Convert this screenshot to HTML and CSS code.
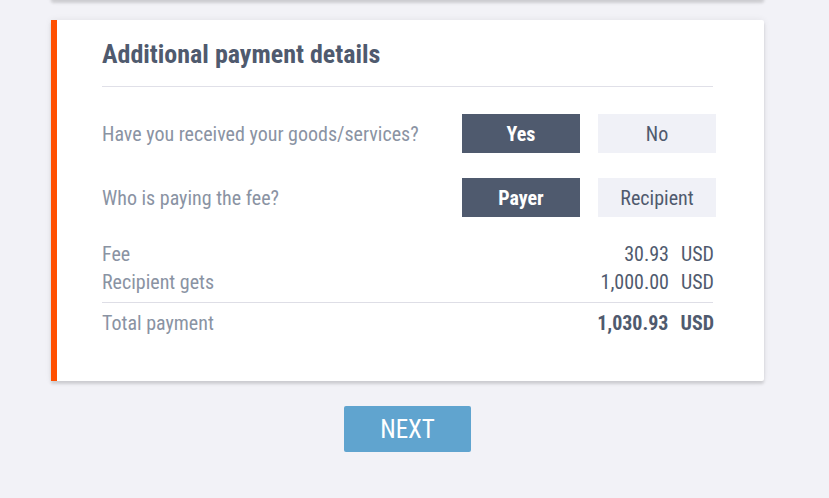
FILE: index.html
```html
<!DOCTYPE html>
<html lang="en">
<head>
<meta charset="utf-8">
<title>Additional payment details</title>
<link rel="stylesheet" href="styles.css">
</head>
<body>
<div class="page">
  <div class="card card-prev"></div>
  <section class="card card-main">
    <h2 class="title">Additional payment details</h2>
    <div class="question">
      <span class="q-label">Have you received your goods/services?</span>
      <div class="choices">
        <button class="choice active">Yes</button>
        <button class="choice">No</button>
      </div>
    </div>
    <div class="question">
      <span class="q-label">Who is paying the fee?</span>
      <div class="choices">
        <button class="choice active">Payer</button>
        <button class="choice">Recipient</button>
      </div>
    </div>
    <div class="summary">
      <div class="sum-row"><span class="sum-label">Fee</span><span class="sum-val">30.93<span class="cur">USD</span></span></div>
      <div class="sum-row"><span class="sum-label">Recipient gets</span><span class="sum-val">1,000.00<span class="cur">USD</span></span></div>
      <div class="sum-row total"><span class="sum-label">Total payment</span><span class="sum-val strong">1,030.93<span class="cur">USD</span></span></div>
    </div>
  </section>
  <div class="actions">
    <button class="next">NEXT</button>
  </div>
</div>
</body>
</html>
```
FILE: styles.css
```css
html, body {
  margin: 0;
  padding: 0;
  background: #f2f2f7;
}
body {
  font-family: "Roboto Condensed", "Roboto", "Liberation Sans Narrow", sans-serif;
  font-stretch: 75%;
  color: #4f5a6e;
}
.page {
  width: 713px;
  padding-left: 51px;
}
.card {
  background: #fff;
  box-shadow: 0 3px 3px rgba(0, 0, 0, 0.13), 0 0 7px rgba(0, 0, 0, 0.07);
  border-radius: 2px;
}
.card-prev {
  height: 40px;
  margin-top: -40px;
}
.card-main {
  margin-top: 20px;
  border-left: 6px solid #ff4f00;
  border-radius: 0 2px 2px 0;
  padding: 0 51px 30px 45px;
  box-sizing: border-box;
  height: 361px;
}
.title {
  margin: 0;
  padding-top: 17px;
  height: 49px;
  font-size: 26px;
  font-weight: 700;
  line-height: 34px;
  color: #4f5a6e;
  border-bottom: 1px solid #e0e0e8;
  box-sizing: content-box;
}
.question {
  display: flex;
  align-items: center;
  justify-content: space-between;
  margin-right: -3px;
  height: 39px;
  margin-top: 27px;
}
.question + .question {
  margin-top: 25px;
}
.q-label {
  font-size: 20px;
  color: #8a93a3;
}
.choices {
  display: flex;
  gap: 18px;
}
.choice {
  width: 118px;
  height: 39px;
  border: none;
  margin: 0;
  padding: 0;
  font-family: inherit;
  font-stretch: 75%;
  font-size: 20px;
  background: #f0f1f7;
  color: #4f5a6e;
}
.choice.active {
  background: #4f5a6e;
  color: #fff;
  font-weight: 700;
}
.summary {
  margin-top: 23px;
  font-size: 20px;
}
.sum-row {
  display: flex;
  justify-content: space-between;
  line-height: 28px;
  color: #8a93a3;
}
.sum-val {
  color: #4f5a6e;
  margin-right: -1px;
}
.cur {
  margin-left: 12px;
}
.sum-row.total {
  border-top: 1px solid #dedee6;
  margin-top: 6px;
  padding-top: 6px;
}
.strong {
  font-weight: 700;
}
.actions {
  display: flex;
  justify-content: center;
  margin-top: 25px;
}
.next {
  width: 127px;
  height: 46px;
  border: none;
  border-radius: 2px;
  background: #60a4cf;
  color: #fff;
  font-family: inherit;
  font-stretch: 75%;
  font-size: 25px;
  font-weight: 400;
  padding: 0;
}
```
